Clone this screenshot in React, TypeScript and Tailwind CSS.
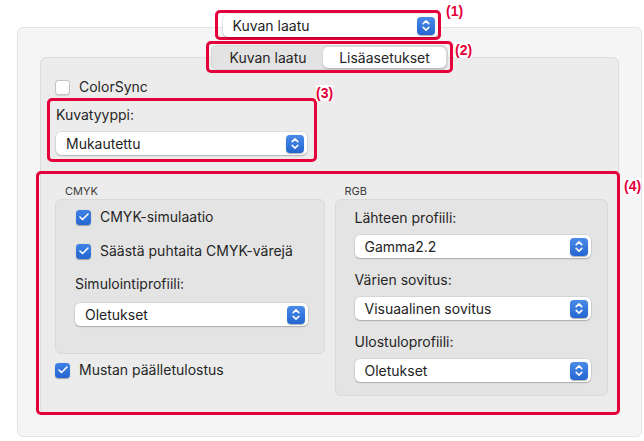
import { Check } from 'lucide-react';

const Stepper = () => (
    <span className="flex items-center justify-center w-[18px] h-[18px] rounded-[4px] bg-gradient-to-b from-[#4a8ae8] to-[#2466d1] shadow-[0_0.5px_1px_rgba(0,0,0,0.3)]">
        <svg width="10" height="13" viewBox="0 0 10 13" fill="none" stroke="white" strokeWidth="1.6" strokeLinecap="round" strokeLinejoin="round">
            <path d="M2.2 4.6 L5 1.9 L7.8 4.6" />
            <path d="M2.2 8.4 L5 11.1 L7.8 8.4" />
        </svg>
    </span>
);

function Popup({ value, className = '' }: { value: string; className?: string }) {
    return (
        <div className={`flex items-center h-[23px] rounded-[5px] bg-white shadow-[0_0_0_0.5px_rgba(0,0,0,0.12),0_1px_1.5px_rgba(0,0,0,0.2)] pl-[10px] pr-[3px] ${className}`}>
            <span className="flex-1 text-[14px] text-[#232323] leading-none">{value}</span>
            <Stepper />
        </div>
    );
}

function CheckBox({ label, checked }: { label: string; checked?: boolean }) {
    return (
        <div className="flex items-center h-[20px] gap-[9px]">
            {checked ? (
                <span className="flex items-center justify-center w-[15px] h-[15px] rounded-[3.5px] bg-gradient-to-b from-[#3f82e6] to-[#2465cf] shadow-[0_0.5px_1px_rgba(0,0,0,0.3)]">
                    <Check size={12} strokeWidth={3.2} color="white" />
                </span>
            ) : (
                <span className="w-[15px] h-[15px] rounded-[3.5px] bg-white border border-[#c4c4c4] shadow-[0_0.5px_1px_rgba(0,0,0,0.1)]" />
            )}
            <span className="text-[14px] text-[#262626] leading-none">{label}</span>
        </div>
    );
}

const Label = ({ children }: { children: string }) => (
    <div className="h-[20px] flex items-center text-[14px] text-[#262626] leading-none">{children}</div>
);

// red annotation frames + numbers drawn over the dialog
const Frame = ({ className }: { className: string }) => (
    <div className={`absolute border-[3px] border-[#e4003b] rounded-[5px] pointer-events-none ${className}`} />
);
const Tag = ({ n, className }: { n: number; className: string }) => (
    <span className={`absolute bg-white text-[14px] leading-[16px] font-bold text-[#e4003b] font-['Liberation_Sans',sans-serif] ${className}`}>({n})</span>
);

export default function App() {
    return (
        <div className="relative w-[644px] h-[441px] bg-white overflow-hidden font-['Inter',sans-serif]">
            <div className="ml-[17px] mt-[27px] w-[625px] h-[410px] rounded-[6px] border border-[#e4e4e4] bg-[#f5f5f5]">
                <div className="relative z-10 flex justify-center -mt-[14px] pl-[1px]">
                    <Popup value="Kuvan laatu" className="w-[215px]" />
                </div>

                {/* tabs */}
                <div className="relative z-10 flex justify-center mt-[8px]">
                    <div className="flex items-center w-[237px] h-[25px] rounded-[6px] bg-[#e3e3e3] border border-[#d6d6d6] p-[1px]">
                        <div className="w-[110px] text-center text-[14px] text-[#262626] leading-none">Kuvan laatu</div>
                        <div className="flex-1 h-full flex items-center justify-center rounded-[5px] bg-white shadow-[0_0.5px_1.5px_rgba(0,0,0,0.25)] text-[14px] text-[#262626] leading-none">Lisäasetukset</div>
                    </div>
                </div>

                <div className="-mt-[13px] mx-[22px] h-[357px] rounded-[6px] border border-[#dcdcdc] bg-[#ececec] pt-[19px] pl-[14px] pr-[10px]">
                    <CheckBox label="ColorSync" />

                    <div className="mt-[8px] pl-[1px] w-[252px]">
                        <Label>Kuvatyyppi:</Label>
                        <Popup value="Mukautettu" className="mt-[7px]" />
                    </div>

                    <div className="flex gap-[10px] mt-[29px]">
                        <div className="w-[270px]">
                            <div className="pl-[10px] h-[14px] text-[11px] text-[#3c3c3c] leading-none flex items-center">CMYK</div>
                            <div className="mt-[1px] h-[155px] rounded-[6px] border border-[#d9d9d9] bg-[#e4e4e4] pt-[7px] pl-[20px] pr-[16px]">
                                <CheckBox label="CMYK-simulaatio" checked />
                                <div className="mt-[14px]">
                                    <CheckBox label="Säästä puhtaita CMYK-värejä" checked />
                                </div>
                                <div className="mt-[13px] -ml-[1px]">
                                    <Label>Simulointiprofiili:</Label>
                                </div>
                                <Popup value="Oletukset" className="mt-[9px] -ml-[1px]" />
                            </div>
                            <div className="mt-[6px]">
                                <CheckBox label="Mustan päälletulostus" checked />
                            </div>
                        </div>

                        <div className="w-[274px]">
                            <div className="pl-[10px] h-[14px] text-[11px] text-[#3c3c3c] leading-none flex items-center">RGB</div>
                            <div className="mt-[1px] h-[197px] rounded-[6px] border border-[#d9d9d9] bg-[#e4e4e4] pt-[8px] pl-[19px] pr-[16px]">
                                <Label>Lähteen profiili:</Label>
                                <Popup value="Gamma2.2" className="mt-[7px]" />
                                <div className="mt-[12px]"><Label>Värien sovitus:</Label></div>
                                <Popup value="Visuaalinen sovitus" className="mt-[7px]" />
                                <div className="mt-[12px]"><Label>Ulostuloprofiili:</Label></div>
                                <Popup value="Oletukset" className="mt-[7px]" />
                            </div>
                        </div>
                    </div>
                </div>
            </div>

            <Frame className="left-[215px] top-[10px] w-[226px] h-[30px]" />
            <Tag n={1} className="left-[446px] top-[3px]" />
            <Frame className="left-[206px] top-[41px] w-[247px] h-[32px]" />
            <Tag n={2} className="left-[455px] top-[42px]" />
            <Frame className="left-[47px] top-[98px] w-[270px] h-[64px]" />
            <Tag n={3} className="left-[316px] top-[85px]" />
            <Frame className="left-[36px] top-[171px] w-[584px] h-[244px]" />
            <Tag n={4} className="left-[624px] top-[178px]" />
        </div>
    );
}
